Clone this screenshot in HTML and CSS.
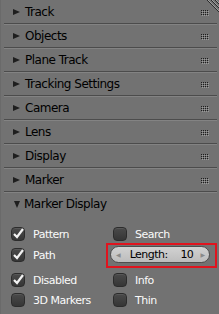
FILE: index.html
```html
<!DOCTYPE html>
<html>
<head>
<meta charset="utf-8">
<link rel="stylesheet" href="styles.css">
</head>
<body>
<div class="panels">
  <div class="hdr first"><span class="tri"></span><span class="title">Track</span><svg class="grip" width="8" height="6" viewBox="0 0 8 6"><use href="#g"/></svg></div>
  <div class="hdr"><span class="tri"></span><span class="title">Objects</span><svg class="grip" width="8" height="6" viewBox="0 0 8 6"><use href="#g"/></svg></div>
  <div class="hdr"><span class="tri"></span><span class="title">Plane Track</span><svg class="grip" width="8" height="6" viewBox="0 0 8 6"><use href="#g"/></svg></div>
  <div class="hdr"><span class="tri"></span><span class="title">Tracking Settings</span><svg class="grip" width="8" height="6" viewBox="0 0 8 6"><use href="#g"/></svg></div>
  <div class="hdr"><span class="tri"></span><span class="title">Camera</span><svg class="grip" width="8" height="6" viewBox="0 0 8 6"><use href="#g"/></svg></div>
  <div class="hdr"><span class="tri"></span><span class="title">Lens</span><svg class="grip" width="8" height="6" viewBox="0 0 8 6"><use href="#g"/></svg></div>
  <div class="hdr"><span class="tri"></span><span class="title">Display</span><svg class="grip" width="8" height="6" viewBox="0 0 8 6"><use href="#g"/></svg></div>
  <div class="hdr"><span class="tri"></span><span class="title">Marker</span><svg class="grip" width="8" height="6" viewBox="0 0 8 6"><use href="#g"/></svg></div>
  <div class="hdr open"><span class="tri down"></span><span class="title">Marker Display</span></div>
  <div class="content">
    <div class="row">
      <div class="cell left"><span class="cb on"><svg width="14" height="14" viewBox="0 0 14 14"><polyline points="3,7 6,10 12,2" fill="none" stroke="#f2f2f2" stroke-width="2.2"/></svg></span><span class="lbl">Pattern</span></div>
      <div class="cell right"><span class="cb"></span><span class="lbl">Search</span></div>
    </div>
    <div class="row">
      <div class="cell left"><span class="cb on"><svg width="14" height="14" viewBox="0 0 14 14"><polyline points="3,7 6,10 12,2" fill="none" stroke="#f2f2f2" stroke-width="2.2"/></svg></span><span class="lbl">Path</span></div>
      <div class="cell rightfield">
        <div class="redbox">
          <div class="field"><span class="arr">&#9664;</span><span class="flabel">Length:</span><span class="fval">10</span><span class="arr">&#9654;</span></div>
        </div>
      </div>
    </div>
    <div class="row sep">
      <div class="cell left"><span class="cb on"><svg width="14" height="14" viewBox="0 0 14 14"><polyline points="3,7 6,10 12,2" fill="none" stroke="#f2f2f2" stroke-width="2.2"/></svg></span><span class="lbl">Disabled</span></div>
      <div class="cell right"><span class="cb"></span><span class="lbl">Info</span></div>
    </div>
    <div class="row tight">
      <div class="cell left"><span class="cb"></span><span class="lbl">3D Markers</span></div>
      <div class="cell right"><span class="cb"></span><span class="lbl">Thin</span></div>
    </div>
  </div>
</div>
<svg class="defs" width="0" height="0"><defs><g id="g"><g fill="#9a9a9a"><rect x="1" y="1" width="1" height="1"/><rect x="3" y="1" width="1" height="1"/><rect x="5" y="1" width="1" height="1"/><rect x="7" y="1" width="1" height="1"/><rect x="1" y="3" width="1" height="1"/><rect x="3" y="3" width="1" height="1"/><rect x="5" y="3" width="1" height="1"/><rect x="7" y="3" width="1" height="1"/><rect x="1" y="5" width="1" height="1"/><rect x="3" y="5" width="1" height="1"/><rect x="5" y="5" width="1" height="1"/><rect x="7" y="5" width="1" height="1"/></g><g fill="#1e1e1e"><rect x="0" y="0" width="1" height="1"/><rect x="2" y="0" width="1" height="1"/><rect x="4" y="0" width="1" height="1"/><rect x="6" y="0" width="1" height="1"/><rect x="0" y="2" width="1" height="1"/><rect x="2" y="2" width="1" height="1"/><rect x="4" y="2" width="1" height="1"/><rect x="6" y="2" width="1" height="1"/><rect x="0" y="4" width="1" height="1"/><rect x="2" y="4" width="1" height="1"/><rect x="4" y="4" width="1" height="1"/><rect x="6" y="4" width="1" height="1"/></g></g></defs></svg>
<svg class="corner" width="13" height="13" viewBox="0 0 13 13"><g stroke-width="1"><line x1="1" y1="0" x2="13" y2="12" stroke="#2a2a2a"/><line x1="2" y1="0" x2="13" y2="11" stroke="#a0a0a0"/><line x1="5" y1="0" x2="13" y2="8" stroke="#2a2a2a"/><line x1="6" y1="0" x2="13" y2="7" stroke="#a0a0a0"/><line x1="9" y1="0" x2="13" y2="4" stroke="#2a2a2a"/><line x1="10" y1="0" x2="13" y2="3" stroke="#a0a0a0"/></g></svg>
</body>
</html>
```
FILE: styles.css
```css
html, body {
  margin: 0;
  padding: 0;
}
body {
  width: 219px;
  height: 314px;
  background: #727272;
  font-family: "DejaVu Sans", sans-serif;
  position: relative;
  overflow: hidden;
  border-left: 1px solid #6a6a6a;
  box-sizing: border-box;
}
.defs {
  position: absolute;
}
.panels {
  display: flex;
  flex-direction: column;
}
.hdr {
  display: flex;
  align-items: center;
  height: 22px;
  margin: 0 2px 1px 3px;
  padding-left: 9px;
  border-bottom: 1px solid #4c4c4c;
  box-shadow: 0 1px 0 #838383;
  font-size: 12px;
  letter-spacing: -0.5px;
  color: #000;
}
.hdr.first {
  height: 23px;
}
.hdr.open {
  border-bottom: none;
  box-shadow: none;
}
.tri {
  width: 0;
  height: 0;
  border-top: 3.5px solid transparent;
  border-bottom: 3.5px solid transparent;
  border-left: 7px solid #1e1e1e;
  margin-right: 5px;
}
.tri.down {
  border-left: 3.5px solid transparent;
  border-right: 3.5px solid transparent;
  border-top: 7px solid #1e1e1e;
  border-bottom: none;
  margin-left: 1px;
  margin-right: 4px;
}
.title {
  white-space: nowrap;
}
.grip {
  margin-left: auto;
  margin-right: 8px;
  margin-top: 2px;
}
.content {
  padding-top: 8px;
  display: flex;
  flex-direction: column;
}
.row {
  display: flex;
  height: 20px;
  margin-bottom: 1px;
}
.row.sep {
  margin-top: 4px;
  margin-bottom: 0;
}
.cell {
  display: flex;
  align-items: center;
  font-size: 11px;
  letter-spacing: -0.5px;
  color: #fafafa;
}
.cell.left {
  width: 95px;
  padding-left: 10px;
}
.cell.right {
  padding-left: 7px;
}
.cell.rightfield {
  padding-left: 0;
}
.cb {
  width: 14px;
  height: 14px;
  box-sizing: border-box;
  border-radius: 4px;
  background: linear-gradient(#4a4a4a, #363636);
  border: 1px solid #2c2c2c;
  box-shadow: inset 0 1px 0 #575757;
  position: relative;
  flex: none;
}
.cb svg {
  position: absolute;
  left: -1px;
  top: -1px;
}
.lbl {
  margin-left: 8px;
  white-space: nowrap;
}
.redbox {
  border: 2px solid #e0141e;
  width: 111px;
  height: 25px;
  box-sizing: border-box;
  margin-top: -2px;
  margin-bottom: -3px;
  padding: 1px 5px 0 2px;
}
.field {
  display: flex;
  align-items: center;
  height: 17px;
  box-sizing: border-box;
  border: 1px solid #4e4e4e;
  border-radius: 9px;
  background: linear-gradient(#d2d2d2, #bcbcbc);
  color: #000;
  font-size: 11px;
  letter-spacing: -0.5px;
  padding: 0 4px 0 5px;
}
.arr {
  font-size: 6px;
  color: #8a8a8a;
  letter-spacing: 0;
}
.flabel {
  margin-left: 9px;
}
.fval {
  margin-left: auto;
  margin-right: 7px;
}
.corner {
  position: absolute;
  top: 0;
  right: 0;
}
```
